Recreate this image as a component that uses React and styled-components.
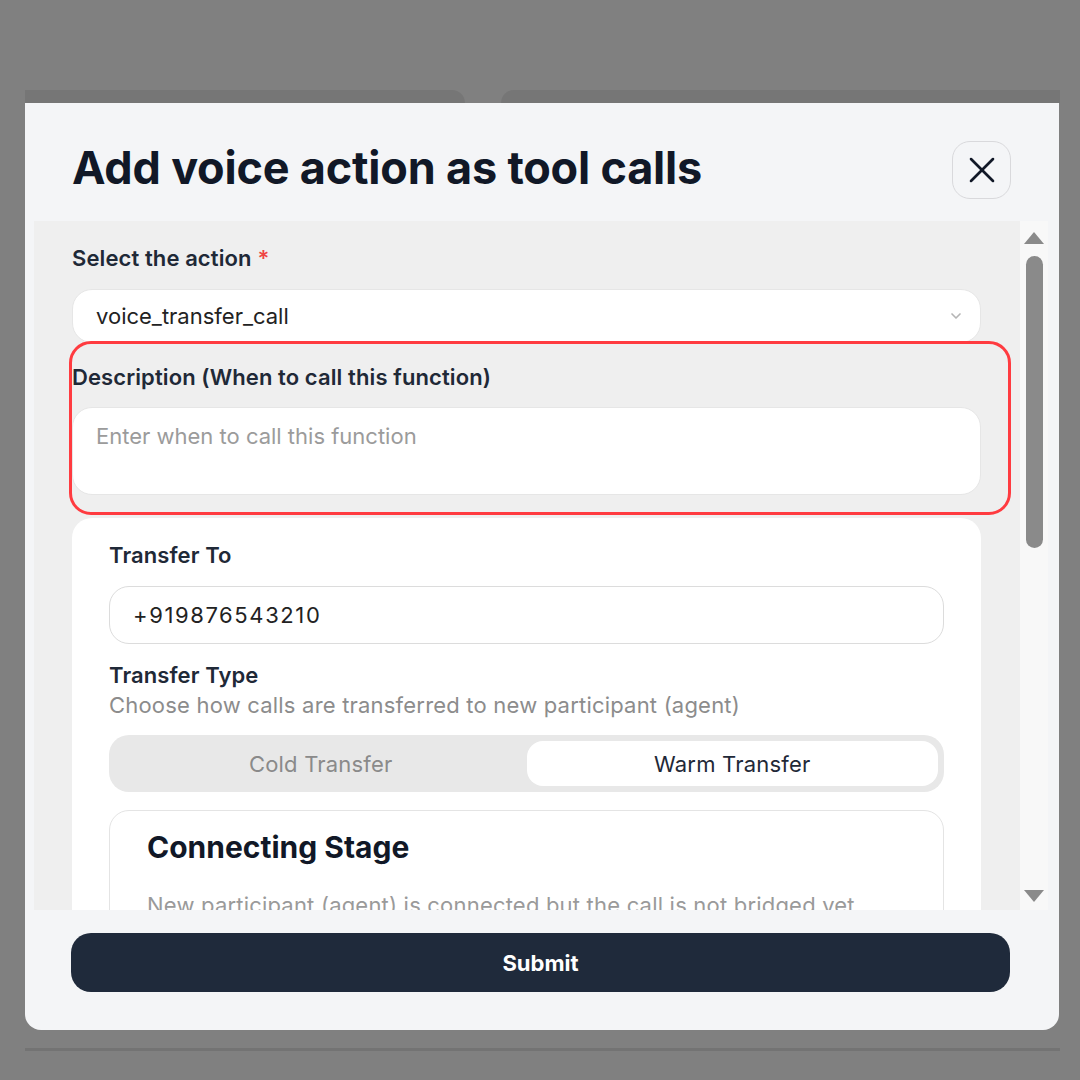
import React from "react";
import styled, { createGlobalStyle } from "styled-components";
import { X, ChevronDown } from "lucide-react";

const GlobalStyle = createGlobalStyle`
  html, body {
    margin: 0;
    padding: 0;
    background: #808080;
    font-family: "Inter", "Liberation Sans", sans-serif;
  }
  * { box-sizing: border-box; }
`;

const Page = styled.div`
  width: 1080px;
  height: 1080px;
  padding: 90px 20px 0 25px;
  overflow: hidden;
`;

const BackStrip = styled.div`
  display: flex;
  height: 13px;
  gap: 36px;
`;

const BackTab = styled.div`
  flex: ${(p) => p.grow};
  background: #767676;
  border-radius: ${(p) => (p.side === "left" ? "0 14px 0 0" : "14px 0 0 0")};
`;

const Modal = styled.div`
  width: 1034px;
  height: 927px;
  background: #f4f5f7;
  border-radius: 0 0 16px 16px;
  display: flex;
  flex-direction: column;
  overflow: hidden;
`;

const Header = styled.div`
  height: 118px;
  flex-shrink: 0;
  display: flex;
  align-items: center;
  justify-content: space-between;
  padding: 12px 48px 0 47px;
`;

const Title = styled.h1`
  margin: 0;
  font-size: 45px;
  line-height: 54px;
  font-weight: 700;
  color: #111827;
  letter-spacing: -0.2px;
`;

const CloseButton = styled.button`
  width: 59px;
  height: 58px;
  margin-top: 4px;
  border: 1.5px solid #d9d9dc;
  border-radius: 18px;
  background: transparent;
  color: #111827;
  display: flex;
  align-items: center;
  justify-content: center;
  padding: 0;
`;

const ScrollArea = styled.div`
  margin: 0 11px 0 9px;
  height: 689px;
  flex-shrink: 0;
  display: flex;
  background: #efefef;
`;

const ScrollContent = styled.div`
  flex: 1;
  overflow: hidden;
  padding: 24px 39px 0 38px;
  display: flex;
  flex-direction: column;
`;

const Scrollbar = styled.div`
  width: 28px;
  background: #f8f8f8;
  display: flex;
  flex-direction: column;
  align-items: center;
  padding: 11px 0 8px;
`;

const Arrow = styled.div`
  width: 0;
  height: 0;
  border-left: 10px solid transparent;
  border-right: 10px solid transparent;
  ${(p) =>
    p.dir === "up"
      ? "border-bottom: 12px solid #8a8a8a;"
      : "border-top: 12px solid #8a8a8a;"}
`;

const Thumb = styled.div`
  width: 17px;
  height: 292px;
  margin-top: 12px;
  border-radius: 9px;
  background: #8a8a8a;
`;

const Spacer = styled.div`
  flex: 1;
`;

const Field = styled.div`
  position: relative;
  display: flex;
  flex-direction: column;
  gap: ${(p) => p.gap || 18}px;
  margin-bottom: ${(p) => p.mb || 0}px;

  ${(p) =>
    p.highlighted &&
    `
    &::after {
      content: "";
      position: absolute;
      left: -3px;
      right: -30px;
      top: -23px;
      bottom: -20px;
      border: 3px solid #ff3b40;
      border-radius: 22px;
      pointer-events: none;
    }
  `}
`;

const LabelGroup = styled.div`
  display: flex;
  flex-direction: column;
  gap: 4px;
`;

const Label = styled.label`
  font-size: 22px;
  line-height: 26px;
  font-weight: 600;
  color: #1f2937;
  letter-spacing: 0.1px;
`;

const Required = styled.span`
  color: #ef4444;
  margin-left: 6px;
`;

const SelectBox = styled.div`
  height: 54px;
  background: #ffffff;
  border: 1px solid #e6e6e6;
  border-radius: 20px;
  display: flex;
  align-items: center;
  justify-content: space-between;
  padding: 0 16px 0 23px;
  font-size: 22px;
  color: #222;
`;

const TextArea = styled.div`
  height: 88px;
  background: #ffffff;
  border: 1px solid #e6e6e6;
  border-radius: 20px;
  padding: 14px 23px;
  font-size: 22px;
  line-height: 28px;
  color: #9b9b9b;
`;

const Card = styled.div`
  background: #ffffff;
  border-radius: 20px;
  padding: 24px 37px 0;
  display: flex;
  flex-direction: column;
`;

const TextInput = styled.div`
  height: 58px;
  border: 1px solid #dcdcdc;
  border-radius: 20px;
  display: flex;
  align-items: center;
  padding: 0 23px;
  font-size: 22px;
  letter-spacing: 1.6px;
  color: #222;
`;

const Hint = styled.div`
  font-size: 22px;
  line-height: 26px;
  color: #8c8c8c;
  letter-spacing: 0.2px;
`;

const Segmented = styled.div`
  height: 57px;
  background: #e8e8e8;
  border-radius: 20px;
  padding: 6px;
  display: grid;
  grid-template-columns: 1fr 1fr;
`;

const Segment = styled.div`
  display: flex;
  align-items: center;
  justify-content: center;
  border-radius: 16px;
  font-size: 22px;
  letter-spacing: 0.2px;
  background: ${(p) => (p.active ? "#ffffff" : "transparent")};
  color: ${(p) => (p.active ? "#1f2937" : "#8a8a8a")};
`;

const StageCard = styled.div`
  border: 1px solid #e4e4e4;
  border-radius: 20px;
  padding: 18px 37px 20px;
  display: flex;
  flex-direction: column;
  gap: 27px;
`;

const StageTitle = styled.h2`
  margin: 0;
  font-size: 30px;
  line-height: 36px;
  font-weight: 700;
  color: #111827;
`;

const StageText = styled.p`
  margin: 0;
  font-size: 22px;
  line-height: 26px;
  color: #9a9a9a;
  letter-spacing: 0.2px;
`;

const Footer = styled.div`
  flex: 1;
  padding: 23px 49px 0 46px;
`;

const SubmitButton = styled.button`
  width: 100%;
  height: 59px;
  border: none;
  border-radius: 20px;
  background: #1f2a3b;
  color: #ffffff;
  font-family: inherit;
  font-size: 22px;
  font-weight: 700;
`;

const BottomLine = styled.div`
  height: 3px;
  width: 1035px;
  margin-top: 18px;
  background: #737373;
`;

export default function App() {
  return (
    <>
      <GlobalStyle />
      <Page>
        <BackStrip>
          <BackTab grow={440} side="left" />
          <BackTab grow={558} side="right" />
        </BackStrip>
        <Modal>
          <Header>
            <Title>Add voice action as tool calls</Title>
            <CloseButton>
              <X size={44} strokeWidth={1.4} />
            </CloseButton>
          </Header>
          <ScrollArea>
            <ScrollContent>
              <Field gap={18} mb={21}>
                <Label>
                  Select the action<Required>*</Required>
                </Label>
                <SelectBox>
                  voice_transfer_call
                  <ChevronDown size={16} color="#b5b5b5" strokeWidth={2.5} />
                </SelectBox>
              </Field>
              <Field gap={17} mb={23} highlighted>
                <Label>Description (When to call this function)</Label>
                <TextArea>Enter when to call this function</TextArea>
              </Field>
              <Card>
                <Field gap={18} mb={18}>
                  <Label>Transfer To</Label>
                  <TextInput>+919876543210</TextInput>
                </Field>
                <Field gap={17} mb={18}>
                  <LabelGroup>
                    <Label>Transfer Type</Label>
                    <Hint>
                      Choose how calls are transferred to new participant
                      (agent)
                    </Hint>
                  </LabelGroup>
                  <Segmented>
                    <Segment>Cold Transfer</Segment>
                    <Segment active>Warm Transfer</Segment>
                  </Segmented>
                </Field>
                <StageCard>
                  <StageTitle>Connecting Stage</StageTitle>
                  <StageText>
                    New participant (agent) is connected but the call is not
                    bridged yet.
                  </StageText>
                </StageCard>
              </Card>
            </ScrollContent>
            <Scrollbar>
              <Arrow dir="up" />
              <Thumb />
              <Spacer />
              <Arrow dir="down" />
            </Scrollbar>
          </ScrollArea>
          <Footer>
            <SubmitButton>Submit</SubmitButton>
          </Footer>
        </Modal>
        <BottomLine />
      </Page>
    </>
  );
}
